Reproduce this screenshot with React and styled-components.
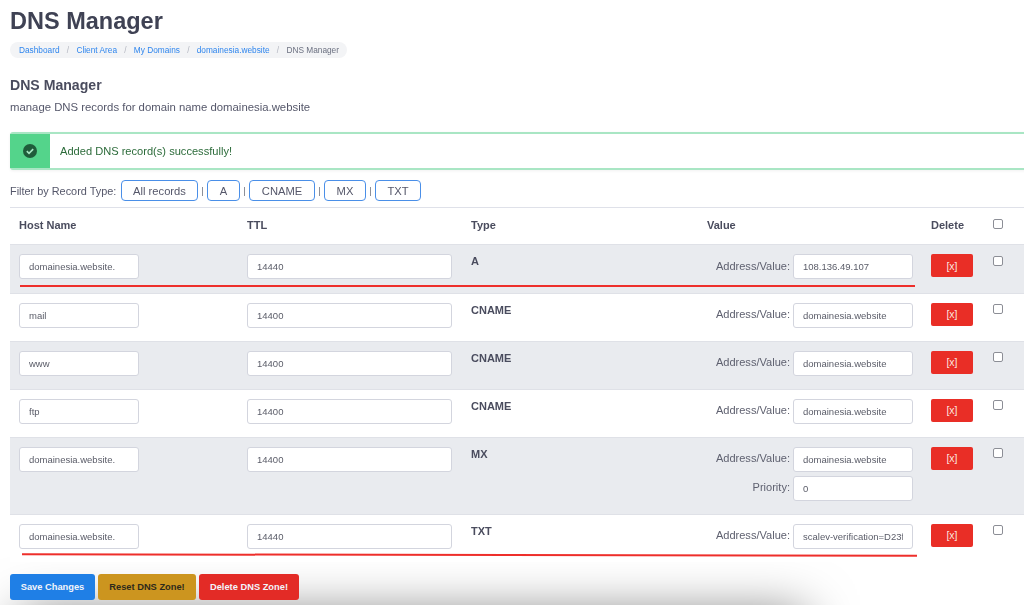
import React from "react";
import styled, { createGlobalStyle } from "styled-components";

const GlobalStyle = createGlobalStyle`
  html, body {
    margin: 0;
    padding: 0;
    background: #fff;
  }
  body {
    font-family: "Liberation Sans", Arial, sans-serif;
    color: #4a4c5e;
  }
`;

const Page = styled.div`
  position: relative;
  width: 1024px;
  height: 605px;
  overflow: hidden;
  padding: 8px 0 0 10px;
  box-sizing: border-box;
  filter: blur(0.35px);
`;

const Title = styled.h1`
  margin: 0;
  font-size: 23.5px;
  line-height: 27px;
  font-weight: 700;
  color: #3f4254;
`;

const Crumbs = styled.nav`
  display: inline-flex;
  align-items: center;
  height: 16px;
  margin-top: 7px;
  padding: 0 8px 0 9px;
  border-radius: 8px;
  background: #f3f4f6;
  font-size: 8.3px;
  color: #6b7080;
`;

const Crumb = styled.a`
  color: #2f86ee;
  text-decoration: none;
`;

const Slash = styled.span`
  margin: 0 7.25px;
  color: #b3b6c0;
`;

const Heading = styled.h2`
  margin: 19px 0 0;
  font-size: 14.1px;
  line-height: 17px;
  font-weight: 700;
  color: #4a4c5e;
`;

const Lead = styled.p`
  margin: 6px 0 0;
  font-size: 11.35px;
  line-height: 14px;
  color: #55576a;
`;

const Alert = styled.div`
  display: flex;
  align-items: stretch;
  height: 38px;
  margin: 18px -12px 0 0;
  border-top: 2px solid #a9e6c4;
  border-bottom: 2px solid #a9e6c4;
  border-radius: 3px;
  background: #fff;
  box-sizing: border-box;
  box-shadow: 0 1px 3px rgba(0, 0, 0, 0.06);
`;

const AlertIcon = styled.div`
  display: flex;
  align-items: center;
  justify-content: center;
  width: 40px;
  background: #54d48b;
`;

const AlertText = styled.div`
  display: flex;
  align-items: center;
  padding-left: 10px;
  font-size: 11.1px;
  color: #2c6b3a;
`;

const FilterBar = styled.div`
  display: flex;
  align-items: center;
  height: 21px;
  margin-top: 10px;
  font-size: 10.9px;
  color: #55576a;
`;

const FilterLabel = styled.span`
  width: 107px;
  margin-right: 4px;
  white-space: nowrap;
`;

const FilterButton = styled.button`
  width: ${(p) => p.$w}px;
  height: 21px;
  padding: 0;
  border: 1px solid #4a8fe8;
  border-radius: 4px;
  background: #fff;
  font-family: inherit;
  font-size: 11.2px;
  color: #55576a;
`;

const Pipe = styled.span`
  width: 9px;
  text-align: center;
  font-size: 9.5px;
  color: #70737f;
`;

const Table = styled.div`
  margin-top: 6px;
  border-top: 1px solid #dfe1e9;
`;

const cols = "228px 224px 236px 224px 61px 1fr";

const HeadRow = styled.div`
  display: grid;
  grid-template-columns: ${cols};
  align-items: center;
  height: 36px;
  padding: 0 0 2px 9px;
  box-sizing: border-box;
  font-size: 11px;
  font-weight: 700;
  color: #4a4c5e;
`;

const Row = styled.div`
  position: relative;
  display: grid;
  grid-template-columns: ${cols};
  align-items: start;
  padding: 9.5px 0 13.5px 9px;
  background: ${(p) => (p.$shade ? "#e9ebef" : "#fff")};
  box-shadow: inset 0 1px 0 #dfe1e7;

  &:nth-child(2) {
    padding-top: 10px;
    padding-bottom: 14px;
  }
`;

const Field = styled.input`
  display: block;
  width: ${(p) => p.$w}px;
  height: 25px;
  padding: 0 9px;
  border: 1px solid #d3d5de;
  border-radius: 3px;
  background: #fff;
  box-sizing: border-box;
  font-family: inherit;
  font-size: 9.5px;
  color: #5a5c68;
  outline: none;
`;

const TypeCell = styled.div`
  font-size: 11px;
  line-height: 14px;
  font-weight: 700;
  color: #4a4c5e;
`;

const ValueCell = styled.div`
  display: flex;
  flex-direction: column;
  align-items: flex-end;
  gap: 4px;
  padding-right: 18px;
`;

const ValueLine = styled.label`
  display: flex;
  align-items: center;
  gap: 3px;
  font-size: 11.05px;
  color: #5f6170;
`;

const LineLabel = styled.span`
  margin-bottom: 2px;
`;

const RemoveButton = styled.button`
  width: 42px;
  height: 23px;
  padding: 0;
  border: 0;
  border-radius: 2px;
  background: #e92e26;
  font-family: inherit;
  font-size: 10.5px;
  color: #fbe3df;
`;

const Check = styled.input.attrs({ type: "checkbox" })`
  appearance: none;
  display: block;
  width: 10px;
  height: 10px;
  margin: 1.5px 0 0 1px;
  border: 1px solid #8c8e96;
  border-radius: 2px;
  background: #fff;
  box-sizing: border-box;
`;

const HeadCheck = styled(Check)`
  margin-top: -3px;
`;

const Underline = styled.div`
  position: absolute;
  left: ${(p) => p.$left}px;
  bottom: 6px;
  width: 895px;
  height: 2px;
  background: #ee2f2b;
  transform: rotate(${(p) => p.$tilt || 0}deg);
`;

const Actions = styled.div`
  position: relative;
  z-index: 1;
  display: flex;
  gap: 3px;
  margin-top: 12px;
`;

const ActionButton = styled.button`
  width: ${(p) => p.$w}px;
  height: 26px;
  padding: 0;
  border: 0;
  border-radius: 3px;
  background: ${(p) => p.$bg};
  font-family: inherit;
  font-size: 9.3px;
  font-weight: 700;
  color: ${(p) => p.$fg || "#f2f4fa"};
`;

const BottomShade = styled.div`
  position: absolute;
  left: 30px;
  top: 622px;
  width: 765px;
  height: 40px;
  box-shadow: 0 0 50px 10px rgba(0, 0, 0, 0.5);
`;

const records = [
  { host: "domainesia.website.", ttl: "14440", type: "A", value: "108.136.49.107", underline: { left: 10 } },
  { host: "mail", ttl: "14400", type: "CNAME", value: "domainesia.website" },
  { host: "www", ttl: "14400", type: "CNAME", value: "domainesia.website" },
  { host: "ftp", ttl: "14400", type: "CNAME", value: "domainesia.website" },
  { host: "domainesia.website.", ttl: "14400", type: "MX", value: "domainesia.website", priority: "0" },
  {
    host: "domainesia.website.",
    ttl: "14440",
    type: "TXT",
    value: "scalev-verification=D23f8a91c7",
    underline: { left: 12, tilt: 0.1 },
  },
];

const crumbs = ["Dashboard", "Client Area", "My Domains", "domainesia.website"];

const filters = [
  ["All records", 77],
  ["A", 33],
  ["CNAME", 66],
  ["MX", 42],
  ["TXT", 46],
];

function SuccessIcon() {
  return (
    <svg width="14" height="14" viewBox="0 0 14 14">
      <circle cx="7" cy="7" r="7" fill="#1f5c3a" />
      <path d="M3.8 7.2l2.2 2.1 4.2-4.2" fill="none" stroke="#a7e6c3" strokeWidth="1.6" />
    </svg>
  );
}

export default function App() {
  return (
    <Page>
      <GlobalStyle />
      <BottomShade />
      <Title>DNS Manager</Title>
      <Crumbs>
        {crumbs.map((c) => (
          <React.Fragment key={c}>
            <Crumb href="#">{c}</Crumb>
            <Slash>/</Slash>
          </React.Fragment>
        ))}
        DNS Manager
      </Crumbs>
      <Heading>DNS Manager</Heading>
      <Lead>manage DNS records for domain name domainesia.website</Lead>
      <Alert>
        <AlertIcon>
          <SuccessIcon />
        </AlertIcon>
        <AlertText>Added DNS record(s) successfully!</AlertText>
      </Alert>
      <FilterBar>
        <FilterLabel>Filter by Record Type:</FilterLabel>
        {filters.map(([label, w], i) => (
          <React.Fragment key={label}>
            {i > 0 && <Pipe>|</Pipe>}
            <FilterButton $w={w}>{label}</FilterButton>
          </React.Fragment>
        ))}
      </FilterBar>
      <Table>
        <HeadRow>
          <div>Host Name</div>
          <div>TTL</div>
          <div>Type</div>
          <div>Value</div>
          <div>Delete</div>
          <div>
            <HeadCheck />
          </div>
        </HeadRow>
        {records.map((r, i) => (
          <Row key={i} $shade={i % 2 === 0}>
            <Field $w={120} defaultValue={r.host} readOnly />
            <Field $w={205} defaultValue={r.ttl} readOnly />
            <TypeCell>{r.type}</TypeCell>
            <ValueCell>
              <ValueLine>
                <LineLabel>Address/Value:</LineLabel>
                <Field $w={120} defaultValue={r.value} readOnly />
              </ValueLine>
              {r.priority && (
                <ValueLine>
                  <LineLabel>Priority:</LineLabel>
                  <Field $w={120} defaultValue={r.priority} readOnly />
                </ValueLine>
              )}
            </ValueCell>
            <RemoveButton>[x]</RemoveButton>
            <Check />
            {r.underline && <Underline $left={r.underline.left} $tilt={r.underline.tilt} />}
          </Row>
        ))}
      </Table>
      <Actions>
        <ActionButton $w={85} $bg="#1f7fe6">Save Changes</ActionButton>
        <ActionButton $w={98} $bg="#cc951f" $fg="#2e2a1c">Reset DNS Zone!</ActionButton>
        <ActionButton $w={100} $bg="#e32b26">Delete DNS Zone!</ActionButton>
      </Actions>
    </Page>
  );
}
